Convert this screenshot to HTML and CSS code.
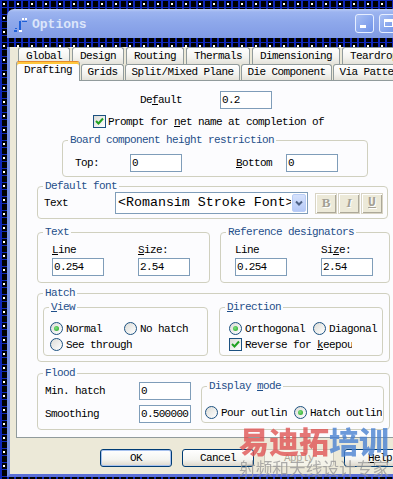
FILE: index.html
```html
<!DOCTYPE html>
<html>
<head>
    <title>Options</title>
    <link rel="stylesheet" href="styles.css">
</head>
<body>

<div class="window">
    <div class="titlebar">
        <svg class="app-icon" width="14" height="14" viewBox="0 0 14 14">
            <rect x="8" y="0" width="2" height="2" fill="#fff"/>
            <rect x="11" y="0" width="2" height="2" fill="#fff"/>
            <rect x="8" y="3" width="5" height="1" fill="#1d5fd8"/>
            <rect x="5" y="3" width="2" height="9" fill="#1d5fd8"/>
            <rect x="1" y="10" width="2" height="1" fill="#1d5fd8"/>
            <rect x="0" y="12" width="3" height="2" fill="#1d5fd8"/>
            <rect x="5" y="12" width="3" height="2" fill="#fff"/>
        </svg>
        <span class="title">Options</span>
        <div class="caption-buttons">
            <span class="cap-btn"><span class="glyph-min"></span></span>
            <span class="cap-btn"><span class="glyph-max"></span></span>
            <span class="cap-btn"></span>
        </div>
    </div>

    <div class="client">
        <div class="tabrow tabs-back">
            <span class="tab">Global</span>
            <span class="tab">Design</span>
            <span class="tab">Routing</span>
            <span class="tab">Thermals</span>
            <span class="tab">Dimensioning</span>
            <span class="tab">Teardrop</span>
        </div>
        <div class="tabrow tabs-front">
            <span class="tab selected">Drafting</span>
            <span class="tab">Grids</span>
            <span class="tab">Split/Mixed Plane</span>
            <span class="tab">Die Component</span>
            <span class="tab">Via Pattern</span>
        </div>

        <div class="panel">
            <div class="row-default">
                <span class="lbl-default">De<u>f</u>ault</span>
                <input class="edit" type="text" value="0.2">
            </div>

            <div class="row-prompt">
                <span class="check"><svg width="11" height="11" viewBox="0 0 11 11"><path d="M2 5 L4.5 7.5 L9 2.5" fill="none" stroke="#21a121" stroke-width="2"/></svg></span>
                <span>Prompt for <u>n</u>et name at completion of</span>
            </div>

            <fieldset class="grp grp-board">
                <legend>Board component height restriction</legend>
                <div class="line">
                    <span class="lbl-top">Top:</span>
                    <input class="edit" type="text" value="0">
                    <span class="lbl-bottom"><u>B</u>ottom</span>
                    <input class="edit" type="text" value="0">
                </div>
            </fieldset>

            <fieldset class="grp grp-font">
                <legend>Default font</legend>
                <div class="line">
                    <span class="lbl-font">Text</span>
                    <div class="combo">
                        <span class="combo-text">&lt;Romansim Stroke Font&gt;</span>
                        <span class="combo-arrow"><svg width="12" height="18" viewBox="0 0 12 18"><path d="M3 7.5 L6 10.5 L9 7.5" fill="none" stroke="#4d6185" stroke-width="2"/></svg></span>
                    </div>
                    <div class="fmt-buttons">
                        <span class="fmt fmt-b">B</span>
                        <span class="fmt fmt-i">I</span>
                        <span class="fmt fmt-u">U</span>
                    </div>
                </div>
            </fieldset>

            <div class="pair">
                <fieldset class="grp grp-text">
                    <legend>Text</legend>
                    <div class="fields">
                        <div class="field">
                            <span><u>L</u>ine</span>
                            <input class="edit" type="text" value="0.254">
                        </div>
                        <div class="field">
                            <span><u>S</u>ize:</span>
                            <input class="edit" type="text" value="2.54">
                        </div>
                    </div>
                </fieldset>
                <fieldset class="grp grp-ref">
                    <legend>Reference designators</legend>
                    <div class="fields">
                        <div class="field">
                            <span>Line</span>
                            <input class="edit" type="text" value="0.254">
                        </div>
                        <div class="field">
                            <span>Si<u>z</u>e:</span>
                            <input class="edit" type="text" value="2.54">
                        </div>
                    </div>
                </fieldset>
            </div>

            <fieldset class="grp grp-hatch">
                <legend>Hatch</legend>
                <div class="sub-row">
                    <fieldset class="grp grp-view">
                        <legend><u>V</u>iew</legend>
                        <div class="opts">
                            <div class="opt-row">
                                <span class="opt opt-normal"><span class="radio on"></span>Normal</span>
                                <span class="opt"><span class="radio"></span>No hatch</span>
                            </div>
                            <div class="opt-row">
                                <span class="opt"><span class="radio"></span>See through</span>
                            </div>
                        </div>
                    </fieldset>
                    <fieldset class="grp grp-dir">
                        <legend><u>D</u>irection</legend>
                        <div class="opts">
                            <div class="opt-row">
                                <span class="opt opt-ortho"><span class="radio on"></span>Orthogonal</span>
                                <span class="opt opt-diag"><span class="radio"></span>Diagonal</span>
                            </div>
                            <div class="opt-row">
                                <span class="opt"><span class="check"><svg width="11" height="11" viewBox="0 0 11 11"><path d="M2 5 L4.5 7.5 L9 2.5" fill="none" stroke="#21a121" stroke-width="2"/></svg></span><span class="clip clip-keep">Reverse for <u>k</u>eepout</span></span>
                            </div>
                        </div>
                    </fieldset>
                </div>
            </fieldset>

            <fieldset class="grp grp-flood">
                <legend>Flood</legend>
                <div class="flood-body">
                    <div class="flood-fields">
                        <div class="flood-line">
                            <span class="lbl-flood">Min. hatch</span>
                            <input class="edit" type="text" value="0">
                        </div>
                        <div class="flood-line">
                            <span class="lbl-flood">Smoothing</span>
                            <input class="edit" type="text" value="0.500000">
                        </div>
                    </div>
                    <fieldset class="grp grp-display">
                        <legend>Display <u>m</u>ode</legend>
                        <div class="opt-row">
                            <span class="opt opt-pour"><span class="radio"></span><span class="clip clip-pour">Pour outline</span></span>
                            <span class="opt"><span class="radio on"></span><span class="clip clip-hatch">Hatch outline</span></span>
                        </div>
                    </fieldset>
                </div>
            </fieldset>
        </div>

        <div class="buttons">
            <span class="btn btn-default">OK</span>
            <span class="btn">Cancel</span>
            <span class="btn btn-disabled">Apply</span>
            <span class="btn"><u>H</u>elp</span>
        </div>
    </div>
</div>

<div class="watermark">
    <div class="wm-big"><span class="wm-red">易迪拓</span><span class="wm-blue">培训</span></div>
    <div class="wm-small">射频和天线设计专家</div>
</div>

</body>
</html>
```

FILE: styles.css
```css
body {
    margin: 0;
    width: 393px;
    height: 479px;
    overflow: hidden;
    position: relative;
    background-color: #000;
    background-image:
        radial-gradient(circle at 4px 4px, #fff 0.8px, transparent 1.2px),
        linear-gradient(90deg, #1028b8 2px, transparent 2px),
        linear-gradient(#1028b8 1px, transparent 1px);
    background-size: 14px 14px, 7px 7px, 7px 7px;
    font-family: "Liberation Mono", monospace;
    font-size: 11px;
    letter-spacing: -0.6px;
    line-height: 12px;
    color: #000;
}
u {
    text-decoration: underline;
    text-underline-offset: 1px;
}

.window {
    margin: 9px 0 0 7px;
    width: 420px;
}
.titlebar {
    height: 29px;
    box-sizing: border-box;
    display: flex;
    align-items: center;
    padding: 2px 5px 0 7px;
    border-radius: 7px 7px 0 0;
    background: linear-gradient(#b8caf6 0, #9cb4f0 3px, #8ea8eb 45%, #819be4 100%);
}
.app-icon {
    flex: none;
}
.title {
    margin-left: 4px;
    font-size: 13px;
    font-weight: bold;
    letter-spacing: 0;
    color: #dce6fa;
}
.caption-buttons {
    margin-left: auto;
    display: flex;
    gap: 5px;
    margin-top: -2px;
}
.cap-btn {
    width: 19px;
    height: 19px;
    box-sizing: border-box;
    border: 1px solid #e6eeff;
    border-radius: 3px;
    background: linear-gradient(135deg, #a9c0f4, #6f92e8);
    position: relative;
}
.glyph-min {
    position: absolute;
    left: 4px;
    top: 10px;
    width: 6px;
    height: 3px;
    background: #fff;
}
.glyph-max {
    position: absolute;
    left: 4px;
    top: 4px;
    width: 9px;
    height: 8px;
    box-sizing: border-box;
    border: 1px solid #fff;
    border-top-width: 3px;
}

.client {
    background: #ece9d8;
    border-left: 3px solid #7590e2;
    border-bottom: 3px solid #5b6fd6;
    padding-bottom: 7px;
}

.tabrow {
    display: flex;
    align-items: flex-end;
}
.tab {
    flex: none;
    box-sizing: border-box;
    height: 17px;
    padding: 0 7px;
    border: 1px solid #919b9c;
    border-bottom: none;
    border-radius: 3px 3px 0 0;
    background: linear-gradient(#ffffff, #f3f3ef 60%, #e4e2d9);
    line-height: 16px;
    white-space: nowrap;
}
.tabs-back {
    margin-top: 9px;
    height: 17px;
    padding-left: 8px;
    gap: 2px;
}
.tabs-front {
    height: 16px;
    padding-left: 6px;
    gap: 1px;
}
.tabs-front .tab {
    height: 16px;
    padding: 0 5.5px;
    line-height: 15px;
}
.tabs-front .tab.selected {
    height: 20px;
    margin-bottom: -1px;
    padding: 0 7px 2px;
    line-height: 17px;
    position: relative;
    z-index: 1;
    background: #fcfcfe;
    border-top: 1px solid #e68b2c;
    box-shadow: inset 0 2px #ffc73c;
}

.panel {
    margin-left: 6px;
    width: 385px;
    height: 358px;
    box-sizing: border-box;
    border: 1px solid #919b9c;
    background: #fcfcfe;
}

.edit {
    flex: none;
    width: 52px;
    height: 18px;
    box-sizing: border-box;
    margin: 0;
    padding: 0 0 0 1px;
    border: 1px solid #7f9db9;
    background: #fff;
    font: inherit;
    letter-spacing: -0.7px;
    color: #000;
    outline: none;
}

.row-default {
    margin-top: 10px;
    padding-left: 123px;
    display: flex;
    align-items: center;
}
.lbl-default {
    width: 80px;
}
.row-prompt {
    margin-top: 6px;
    padding-left: 76px;
    height: 13px;
    display: flex;
    align-items: center;
    gap: 2px;
}

.check {
    flex: none;
    width: 13px;
    height: 13px;
    box-sizing: border-box;
    border: 1px solid #1c5180;
    background: linear-gradient(135deg, #dcdcd7, #ffffff);
    display: flex;
}
.radio {
    flex: none;
    width: 13px;
    height: 13px;
    box-sizing: border-box;
    border: 1px solid #1c5180;
    border-radius: 50%;
    background: linear-gradient(135deg, #dcdcd7, #ffffff);
    display: flex;
    align-items: center;
    justify-content: center;
}
.radio.on::after {
    content: "";
    width: 5px;
    height: 5px;
    border-radius: 50%;
    background: radial-gradient(circle at 40% 40%, #7ee07e, #21a121);
}

/* group boxes: legend sits at the left edge, inner padding goes on the child */
.grp {
    margin: 0;
    box-sizing: border-box;
    border: 1px solid #d0d0bf;
    border-radius: 4px;
    min-width: 0;
    padding-left: 0;
    padding-right: 0;
}
.grp legend {
    margin-left: 5px;
    padding: 0 2px;
    line-height: 12px;
    color: #1f4f8a;
}
.line {
    display: flex;
    align-items: center;
}

.grp-board {
    margin: 6px 0 0 45px;
    width: 306px;
    padding-top: 8px;
    padding-bottom: 4px;
}
.grp-board .line {
    padding-left: 12px;
}
.lbl-top {
    width: 55px;
}
.lbl-bottom {
    margin-left: 54px;
    width: 50px;
}

.grp-font {
    margin: 3px 0 0 20px;
    width: 351px;
    padding-top: 0;
    padding-bottom: 4px;
}
.grp-font .line {
    padding-left: 6px;
}
.lbl-font {
    width: 71px;
}
.combo {
    width: 193px;
    height: 22px;
    box-sizing: border-box;
    border: 1px solid #7f9db9;
    background: #fff;
    display: flex;
}
.combo-text {
    flex: 1;
    padding-left: 2px;
    overflow: hidden;
    white-space: nowrap;
    font-size: 13.3px;
    letter-spacing: 0;
    line-height: 20px;
}
.combo-arrow {
    flex: none;
    width: 14px;
    margin: 1px;
    border: 1px solid #b9cdf6;
    border-radius: 2px;
    box-sizing: border-box;
    background: linear-gradient(#d6e2fc, #b5c9f7);
    display: flex;
    align-items: center;
    justify-content: center;
}
.fmt-buttons {
    margin-left: 7px;
    display: flex;
    gap: 1px;
}
.fmt {
    width: 22px;
    height: 21px;
    box-sizing: border-box;
    border: 1px solid #d8d4c4;
    box-shadow: inset 1px 1px #fff, inset -1px -1px #aca899;
    background: #ece9d8;
    color: #a3a094;
    text-shadow: 1px 1px #fff;
    font-family: "Liberation Serif", serif;
    font-size: 13px;
    letter-spacing: 0;
    font-weight: bold;
    display: flex;
    align-items: center;
    justify-content: center;
}
.fmt-i {
    font-style: italic;
}
.fmt-u {
    text-decoration: underline;
    font-family: "Liberation Mono", monospace;
}

.pair {
    margin: 7px 0 0 20px;
    display: flex;
    gap: 10px;
}
.grp-text {
    width: 173px;
    padding-top: 6px;
    padding-bottom: 6px;
}
.grp-ref {
    width: 170px;
    padding-top: 6px;
    padding-bottom: 6px;
}
.fields {
    display: flex;
    gap: 34px;
    padding-left: 14px;
}
.field {
    display: flex;
    flex-direction: column;
    gap: 2px;
}

.grp-hatch {
    margin: 4px 0 0 20px;
    width: 353px;
    padding-top: 2px;
    padding-bottom: 5px;
}
.sub-row {
    display: flex;
    gap: 11px;
    padding-left: 5px;
}
.grp-view {
    width: 165px;
    padding-top: 9px;
    padding-bottom: 4px;
}
.grp-view .opts {
    padding-left: 6px;
}
.grp-dir {
    width: 164px;
    padding-top: 9px;
    padding-bottom: 4px;
}
.grp-dir .opts {
    padding-left: 9px;
}
.opts {
    display: flex;
    flex-direction: column;
    gap: 3px;
}
.opt-row {
    display: flex;
    height: 13px;
    align-items: center;
}
.opt {
    display: flex;
    align-items: center;
    gap: 3px;
    white-space: nowrap;
}
.opt-normal {
    width: 74px;
}
.opt-ortho {
    width: 84px;
}
.clip {
    overflow: hidden;
    white-space: nowrap;
}
.clip-keep {
    width: 107px;
}
.clip-pour {
    width: 66px;
}
.clip-hatch {
    width: 72px;
}

.grp-flood {
    margin: 5px 0 0 20px;
    width: 353px;
    padding-top: 3px;
    padding-bottom: 6px;
}
.flood-body {
    display: flex;
    padding-left: 7px;
}
.flood-fields {
    display: flex;
    flex-direction: column;
    gap: 5px;
}
.flood-line {
    display: flex;
    align-items: center;
}
.lbl-flood {
    width: 94px;
}
.grp-display {
    margin: -2px 0 0 10px;
    width: 183px;
    padding-top: 14px;
    padding-bottom: 3px;
}
.grp-display .opt-row {
    padding-left: 3px;
}
.opt-pour {
    width: 89px;
}

.buttons {
    margin-top: 11px;
    padding-left: 90px;
    display: flex;
    gap: 10px;
}
.btn {
    flex: none;
    width: 72px;
    height: 18px;
    box-sizing: border-box;
    border: 1px solid #003c74;
    border-radius: 3px;
    background: linear-gradient(#ffffff, #f4f4f0 60%, #dcd7cb);
    display: flex;
    align-items: center;
    justify-content: center;
}
.btn-default {
    box-shadow: inset 0 0 0 1px #a8c2ef;
}
.btn-disabled {
    width: 70px;
    border-color: #c9c7ba;
    background: #f5f4ea;
    color: #aca899;
}

.watermark {
    position: absolute;
    left: 239px;
    top: 424px;
    font-family: "Noto Sans CJK SC", sans-serif;
    letter-spacing: 0;
    opacity: 0.8;
    pointer-events: none;
}
.wm-big {
    font-size: 30px;
    line-height: 32px;
    font-weight: 900;
}
.wm-red {
    color: #e05555;
}
.wm-blue {
    color: #4a82d2;
}
.wm-small {
    margin-top: 3px;
    font-size: 16.7px;
    line-height: 18px;
    color: #9a9a9a;
}
```
